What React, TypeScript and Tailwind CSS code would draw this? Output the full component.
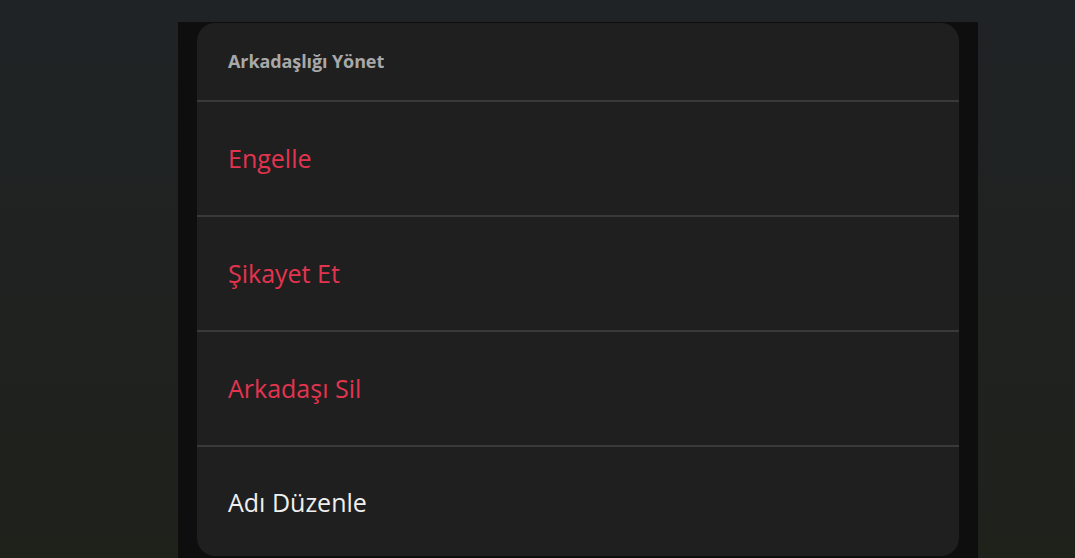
const rows = [
  { label: 'Engelle', danger: true },
  { label: 'Şikayet Et', danger: true },
  { label: 'Arkadaşı Sil', danger: true },
  { label: 'Adı Düzenle', danger: false },
];

export default function App() {
  return (
    <div
      className="flex h-[558px] w-[1075px] overflow-hidden bg-gradient-to-b from-[#1f2325] to-[#1f211b] pl-[178px] pt-[22px]"
      style={{ fontFamily: '"Open Sans", "Noto Sans", sans-serif' }}
    >
      {/* dark backdrop strip behind the sheet */}
      <div className="flex w-[800px] bg-[#0e0e0e] pl-[19px] pr-[19px] pt-px">
        <div className="flex h-[533px] w-[762px] flex-col overflow-hidden rounded-[18px] bg-[#1f1f1f]">
          <div className="flex h-[79px] shrink-0 items-center border-b-2 border-[#393939] px-[31px]">
            <h2 className="text-[18px] font-bold tracking-[-0.1px] text-[#a8a8a8]">Arkadaşlığı Yönet</h2>
          </div>
          {rows.map((r, i) => (
            <button
              key={r.label}
              className={
                'flex h-[115px] shrink-0 items-center px-[31px] text-left text-[25px] font-medium ' +
                (i < rows.length - 1 ? 'border-b-2 border-[#393939] ' : 'pb-[4px] ') +
                (r.danger ? 'text-[#e3344f]' : 'text-[#efefef]')
              }
            >
              {r.label}
            </button>
          ))}
        </div>
      </div>
    </div>
  );
}
